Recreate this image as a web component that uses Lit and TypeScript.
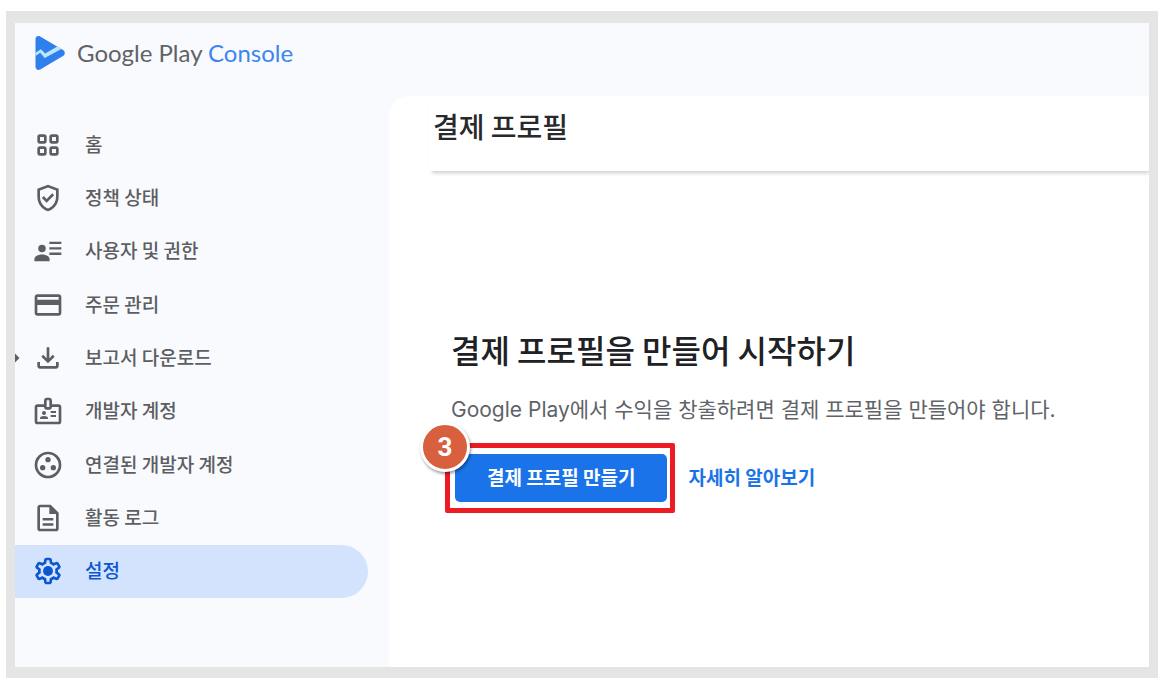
import { LitElement, html, svg, css, nothing, type SVGTemplateResult } from "lit";
import { customElement, property } from "lit/decorators.js";
import { classMap } from "lit/directives/class-map.js";

const icons: Record<string, SVGTemplateResult> = {
  home: svg`<g fill="none" stroke="currentColor" stroke-width="2">
    <rect x="5" y="5" width="5" height="5" rx="1"/><rect x="14" y="5" width="5" height="5" rx="1"/>
    <rect x="5" y="14" width="5" height="5" rx="1"/><rect x="14" y="14" width="5" height="5" rx="1"/></g>`,
  policy: svg`<path d="M12 2L4 5v6.09c0 5.05 3.41 9.76 8 10.91 4.59-1.15 8-5.86 8-10.91V5l-8-3zm6 9.09c0 4-2.55 7.7-6 8.83-3.45-1.13-6-4.82-6-8.83v-4.7l6-2.25 6 2.25v4.7z"/><path d="M8.82 10.59L7.4 12l3.54 3.54 5.66-5.66-1.41-1.41-4.24 4.24-2.13-2.12z"/>`,
  users: svg`<circle cx="7.5" cy="10.2" r="2.8"/><path d="M1.8 19.7v-1.6c0-2.3 3-3.5 5.700-3.500s5.700 1.200 5.700 3.500v1.600z"/><path d="M13 5h9v1.800h-9zM13 9.100h9v1.800h-9zM13 13.200h9V15h-9z"/>`,
  orders: svg`<path d="M20 4H4c-1.110 0-2 .89-2 2v12c0 1.110.89 2 2 2h16c1.110 0 2-.89 2-2V6c0-1.110-.89-2-2-2zm0 14H4v-6h16v6zm0-10H4V6h16v2z"/>`,
  download: svg`<path d="M12 16l-5-5 1.400-1.450 2.600 2.600V4h2v8.150l2.600-2.600L17 11l-5 5z"/><path d="M6 20c-1.100 0-2-.9-2-2v-3h2v3h12v-3h2v3c0 1.100-.9 2-2 2H6z"/>`,
  account: svg`<path d="M20 7h-5V4c0-1.100-.9-2-2-2h-2c-1.100 0-2 .9-2 2v3H4c-1.100 0-2 .9-2 2v11c0 1.100.9 2 2 2h16c1.100 0 2-.9 2-2V9c0-1.100-.9-2-2-2zM11 4h2v5h-2V4zm9 16H4V9h5c0 1.100.9 2 2 2h2c1.100 0 2-.9 2-2h5v11z"/><circle cx="9" cy="13.5" r="1.5"/><path d="M11.080 16.180C10.440 15.900 9.740 15.750 9 15.750s-1.440.15-2.080.43c-.56.24-.92.78-.92 1.390V18h6v-.43c0-.6-.36-1.150-.92-1.390zM14 15h4v1.500h-4zM14 12h4v1.500h-4z"/>`,
  linked: svg`<circle cx="12" cy="12" r="9" fill="none" stroke="currentColor" stroke-width="2"/><circle cx="12" cy="8" r="2"/><circle cx="8" cy="14" r="2"/><circle cx="16" cy="14" r="2"/>`,
  log: svg`<path d="M14 2H6c-1.100 0-2 .9-2 2v16c0 1.100.9 2 2 2h12c1.100 0 2-.9 2-2V8l-6-6zM6 20V4h7v5h5v11H6z"/><path d="M8 12h8v1.800H8zM8 16h8v1.800H8z"/>`,
  settings: svg`<path fill-rule="evenodd" d="M10.825 22q-.675 0-1.1625-.45T9.075 20.45L8.85 18.8q-.325-.125-.6125-.3T7.675 18.125L6.125 18.775q-.625.275-1.25.05T3.9 18.025L2.725 15.975q-.35-.575-.2-1.225t.675-1.075l1.325-1Q4.5 12.5 4.5 12.3375v-.675q0-.1625.025-.3375l-1.325-1Q2.675 9.9 2.525 9.25t.2-1.225L3.9 5.975q.35-.575.975-.8t1.25.05L7.675 5.875q.275-.2.575-.375t.6-.3l.225-1.65q.1-.65.5875-1.1T10.825 2H13.175q.675 0 1.1625.45T14.925 3.55L15.15 5.2q.325.125.6125.3T16.325 5.875L17.875 5.225q.625-.275 1.25-.05t.975.8L21.275 8.025q.35.575.2 1.225T20.8 10.325l-1.325 1q.025.175.025.3375v.675q0 .1625-.025.3375l1.325 1q.525.425.675 1.075t-.2 1.225L20.1 18.025q-.35.575-.975.8t-1.25-.05L16.325 18.125q-.275.2-.575.375t-.6.3l-.225 1.65q-.1.65-.5875 1.1T13.175 22zM11 20H12.975L13.325 17.35q.775-.2 1.4375-.5875T15.975 15.825L18.45 16.85 19.425 15.15 17.275 13.525q.125-.35.175-.7375T17.5 12t-.05-.7875-.175-.7375L19.425 8.85 18.45 7.15 15.975 8.2q-.55-.575-1.2125-.9625T13.325 6.65L13 4H11.025L10.675 6.65q-.775.2-1.4375.5875T8.025 8.175L5.55 7.15 4.575 8.85 6.725 10.45q-.125.375-.175.75T6.5 12q0 .4.05.775t.175.75L4.575 15.15 5.55 16.85 8.025 15.8q.55.575 1.2125.9625T10.675 17.35z"/><circle cx="12" cy="12" r="3.7"/>`,
};

interface NavEntry {
  icon: string;
  label: string;
  expandable?: boolean;
  active?: boolean;
}

const entries: NavEntry[] = [
  { icon: "home", label: "홈" },
  { icon: "policy", label: "정책 상태" },
  { icon: "users", label: "사용자 및 권한" },
  { icon: "orders", label: "주문 관리" },
  { icon: "download", label: "보고서 다운로드", expandable: true },
  { icon: "account", label: "개발자 계정" },
  { icon: "linked", label: "연결된 개발자 계정" },
  { icon: "log", label: "활동 로그" },
  { icon: "settings", label: "설정", active: true },
];

@customElement("side-nav")
export class SideNav extends LitElement {
  @property({ attribute: false }) items: NavEntry[] = [];

  static styles = css`
    :host {
      display: block;
    }
    .list {
      display: flex;
      flex-direction: column;
      min-height: 480px;
    }
    .item {
      flex: 1;
      display: flex;
      align-items: center;
      margin-right: 21px;
      border-radius: 0 27px 27px 0;
      color: #5c5e61;
      font-size: 19px;
      font-weight: 500;
      line-height: 28px;
      text-decoration: none;
      white-space: nowrap;
    }
    .item.active {
      background: #d3e3fd;
      color: #0b57d0;
    }
    .lead {
      display: flex;
      width: 17px;
    }
    .icon {
      width: 32px;
      height: 32px;
      margin-right: 21px;
      fill: currentColor;
    }
    .label {
      padding-bottom: 2px;
    }
  `;

  render() {
    return html`<nav class="list">
      ${this.items.map(
        (item) => html`<a
          href="#"
          class=${classMap({ item: true, active: !!item.active })}
          aria-current=${item.active ? "page" : nothing}
        >
          <span class="lead"
            >${item.expandable
              ? html`<svg width="5" height="10" viewBox="0 0 5 10" aria-hidden="true">
                  <path d="M0 0.5L4.5 5L0 9.5z" fill="currentColor" />
                </svg>`
              : nothing}</span
          >
          <svg class="icon" viewBox="0 0 24 24" aria-hidden="true">${icons[item.icon]}</svg>
          <span class="label">${item.label}</span>
        </a>`
      )}
    </nav>`;
  }
}

@customElement("app-root")
export class AppRoot extends LitElement {
  static styles = css`
    :host {
      display: flex;
      box-sizing: border-box;
      min-height: 100vh;
      padding: 11px 5px 4px 6px;
      background: #fff;
      font-family: "Noto Sans CJK KR", sans-serif;
    }
    .frame {
      flex: 1;
      min-width: 0;
      display: flex;
      flex-direction: column;
      border: solid #e5e5e5;
      border-width: 12px 9px 11px;
      background: #f8fafe;
      overflow: hidden;
    }
    .topbar {
      display: flex;
      align-items: center;
      gap: 12px;
      padding: 12px 20px 25px;
    }
    .mark {
      width: 30px;
      height: 36px;
    }
    .brand {
      color: #5f6368;
      font-family: "Lato", sans-serif;
      font-size: 24px;
      line-height: 36px;
      white-space: nowrap;
    }
    .console {
      color: #3c86ee;
    }
    .body {
      flex: 1;
      display: grid;
      grid-template-columns: 374px minmax(0, 1fr);
    }
    .side {
      padding: 22px 0;
    }
    .panel {
      background: #fff;
      border-top-left-radius: 20px;
    }
    .heading {
      margin-left: 40px;
      padding: 12px 4px 27px;
      box-shadow: 2px 3px 4px -1px #ccc;
    }
    .title {
      margin: 0;
      color: #28292b;
      font-size: 28px;
      font-weight: 500;
      line-height: 36px;
    }
    .empty {
      padding: 158px 40px 40px 62px;
    }
    .lead {
      margin: 0;
      color: #202124;
      font-size: 32px;
      font-weight: 500;
      line-height: 40px;
    }
    .text {
      margin: 25px 0 17px;
      color: #5f6368;
      font-family: "Inter", "Noto Sans CJK KR", sans-serif;
      font-size: 21px;
      line-height: 32px;
    }
    .actions {
      display: flex;
      align-items: center;
      gap: 13px;
      margin-left: -6px;
    }
    .callout {
      position: relative;
      padding: 6px 3px 6px 5px;
      border: 5px solid #ed1c24;
      border-radius: 2px;
    }
    .create {
      display: block;
      padding: 9px 32px 11px;
      border: 0;
      border-radius: 5px;
      background: #1a73e8;
      color: #fff;
      font: 700 19px/28px "Noto Sans CJK KR", sans-serif;
      white-space: nowrap;
    }
    .step {
      position: absolute;
      top: -26px;
      left: -30px;
      width: 44px;
      height: 44px;
      border: 3px solid #fff;
      border-radius: 50%;
      background: #d9603f;
      box-shadow: 1px 2px 3px rgba(0, 0, 0, 0.4);
      color: #fff;
      font: 700 26px/44px "Roboto", sans-serif;
      text-align: center;
    }
    .more {
      padding-bottom: 2px;
      color: #1a73e8;
      font-size: 19px;
      font-weight: 700;
      line-height: 28px;
      text-decoration: none;
    }
  `;

  render() {
    return html`<div class="frame">
      <header class="topbar">
        <svg class="mark" viewBox="0 0 30 36" aria-hidden="true">
          <path
            d="M.5 4.2C.5 1.5 3 .3 5.200 1.500L28 14.900c2.400 1.400 2.400 4.600 0 6L5.200 34.500C3 35.700.5 34.500.5 31.800z"
            fill="#2f80ed"
          />
          <path
            d="M.5 17.700L5.900 14.200L10.200 18.600L22.300 11.600L26.300 14L9.700 22.900L5.300 17.800L.5 21z"
            fill="#b9e6fc"
          />
        </svg>
        <span class="brand">Google Play <span class="console">Console</span></span>
      </header>
      <div class="body">
        <side-nav class="side" .items=${entries}></side-nav>
        <main class="panel">
          <div class="heading"><h1 class="title">결제 프로필</h1></div>
          <section class="empty">
            <h2 class="lead">결제 프로필을 만들어 시작하기</h2>
            <p class="text">Google Play에서 수익을 창출하려면 결제 프로필을 만들어야 합니다.</p>
            <div class="actions">
              <div class="callout">
                <button class="create" type="button">결제 프로필 만들기</button>
                <span class="step">3</span>
              </div>
              <a class="more" href="#">자세히 알아보기</a>
            </div>
          </section>
        </main>
      </div>
    </div>`;
  }
}
